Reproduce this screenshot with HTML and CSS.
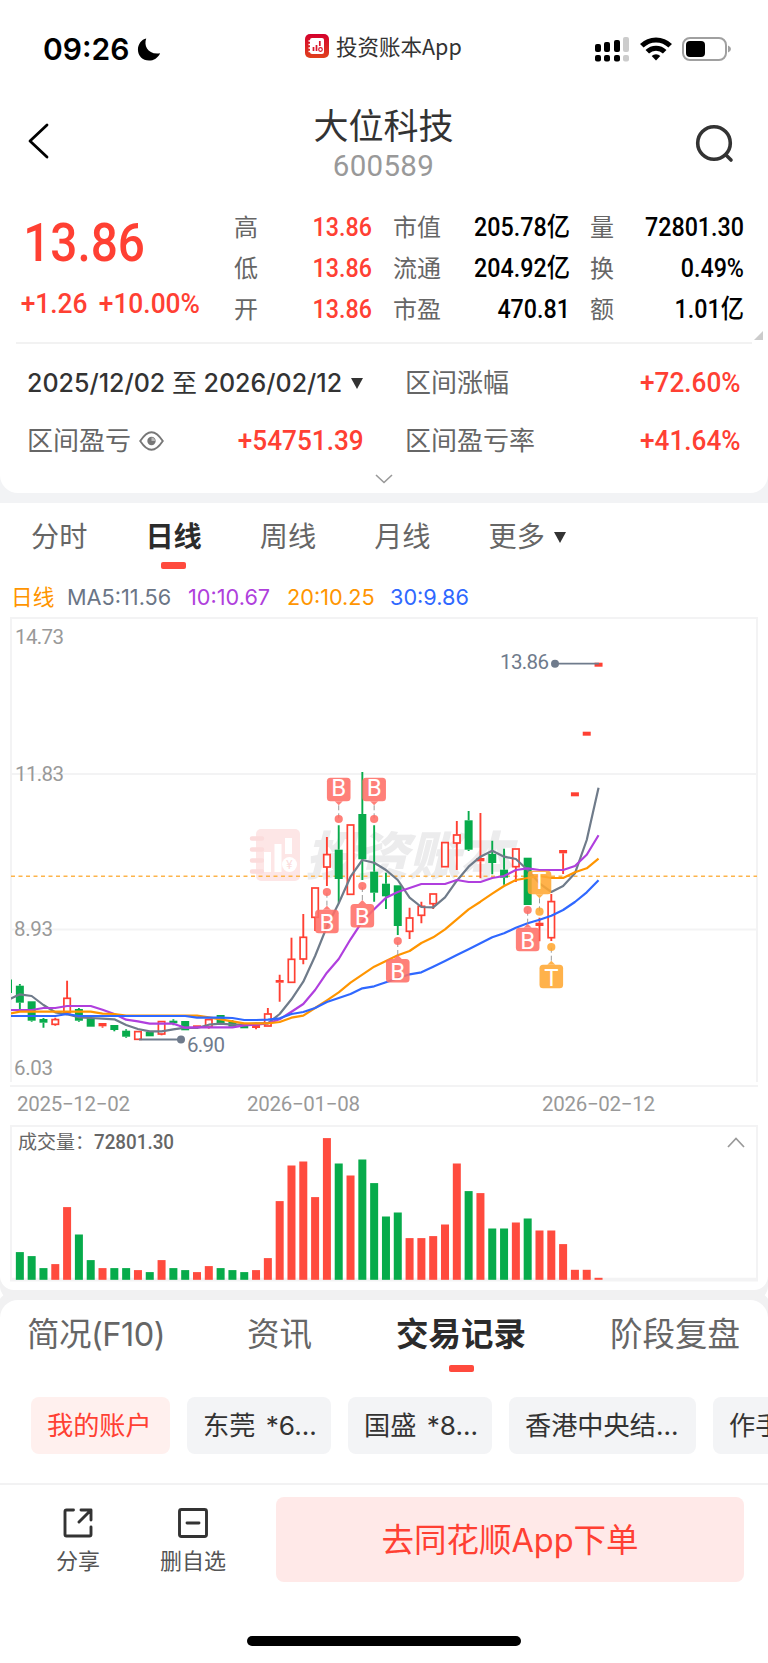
FILE: index.html
```html
<!DOCTYPE html>
<html lang="zh-CN">
<head>
    <meta charset="UTF-8">
    <meta name="viewport" content="width=device-width, initial-scale=1.0">
    <title>大位科技 600589</title>
    <link rel="stylesheet" href="styles.css">
</head>
<body>
    <div class="card top-card">
        <div class="status-bar">
            <div class="status-left">
                <span class="time">09:26</span>
                <svg width="24" height="25" viewBox="0 0 26 26"><path d="M10 1 C7 9 12 19 25 17 C23 22 18 25 13 25 C6 25 1 20 1 13 C1 7 5 2 10 1Z"/></svg>
            </div>
            <div class="status-center">
                <svg width="24" height="24" viewBox="0 0 24 24">
                    <defs><linearGradient id="logo" x1="0" y1="0" x2="0" y2="1"><stop offset="0" stop-color="#d4002c"/><stop offset="1" stop-color="#e0401c"/></linearGradient></defs>
                    <rect width="24" height="24" rx="5" fill="url(#logo)"/>
                    <rect x="5" y="4" width="14" height="16" rx="2" fill="#fff"/>
                    <path d="M3.5 7h3M3.5 10.500h3M3.500 14h3M3.500 17.500h3" stroke="#fff" stroke-width="1.500"/>
                    <path d="M8.500 17v-4M11.500 17v-6M14.800 12V7" stroke="#d9152a" stroke-width="1.700"/>
                    <circle cx="15.500" cy="15.500" r="1.800" fill="none" stroke="#d9152a" stroke-width="1.200"/>
                </svg>
                <span>投资账本App</span>
            </div>
            <div class="status-right">
                <svg width="34" height="25" viewBox="0 0 34 25">
                    <rect x="0" y="7" width="6" height="8" rx="2"/><rect x="9" y="5" width="6" height="10" rx="2"/><rect x="19" y="3" width="6" height="12" rx="2"/><rect x="28" y="0" width="6" height="15" rx="2" fill="#ccc"/>
                    <rect x="0" y="18" width="6" height="6.500" rx="2"/><rect x="9" y="18" width="6" height="6.500" rx="2"/><rect x="19" y="18" width="6" height="6.500" rx="2"/><rect x="28" y="18" width="6" height="6.500" rx="2" fill="#ccc"/>
                </svg>
                <svg class="wifi" width="32" height="24" viewBox="0 0 32 24" fill="none" stroke="#000" stroke-width="5">
                    <path d="M1.800 8.800a20 20 0 0 1 28.400 0"/><path d="M7.300 14.800a12.300 12.300 0 0 1 17.400 0"/><path d="M16 23.500l-4.300-4.500a6 6 0 0 1 8.600 0z" fill="#000" stroke="none"/>
                </svg>
                <svg width="49" height="24" viewBox="0 0 49 24">
                    <rect x="1" y="1" width="43" height="22" rx="7" fill="none" stroke="#a0a0a0" stroke-width="2"/>
                    <rect x="4" y="4" width="19" height="16" rx="4"/><path d="M46 8.500q3 1.200 3 3.500t-3 3.500z" fill="#a0a0a0"/>
                </svg>
            </div>
        </div>

        <header class="title-bar">
            <svg class="back" width="22" height="36" viewBox="0 0 22 36"><path d="M20 2L3 18L20 34" fill="none" stroke="#000" stroke-width="2.800" stroke-linecap="round" stroke-linejoin="round"/></svg>
            <div class="title">
                <h1>大位科技</h1>
                <p>600589</p>
            </div>
            <svg class="search" width="40" height="40" viewBox="0 0 40 40" fill="none" stroke="#333" stroke-width="3.600" stroke-linecap="round"><circle cx="19" cy="19" r="16.300"/><path d="M31 31l5 5"/></svg>
        </header>

        <section class="quote">
            <div class="price">
                <div class="price-now">13.86</div>
                <div class="price-change"><span>+1.26</span><span>+10.00%</span></div>
            </div>
            <dl class="stats">
                <dt>高</dt><dd class="up">13.86</dd><dt>市值</dt><dd>205.78亿</dd><dt>量</dt><dd>72801.30</dd>
                <dt>低</dt><dd class="up">13.86</dd><dt>流通</dt><dd>204.92亿</dd><dt>换</dt><dd>0.49%</dd>
                <dt>开</dt><dd class="up">13.86</dd><dt>市盈</dt><dd>470.81</dd><dt>额</dt><dd>1.01亿</dd>
            </dl>
            <i class="corner"></i>
        </section>

        <section class="range">
            <div class="range-date"><span>2025/12/02 <em>至</em> 2026/02/12</span><i class="arrow"></i></div>
            <div class="range-item"><span>区间涨幅</span><b>+72.60%</b></div>
            <div class="range-item">
                <span>区间盈亏</span>
                <svg width="25" height="20" viewBox="0 0 25 20" fill="none" stroke="#777" stroke-width="1.900"><path d="M1.200 10Q7 1.200 12.500 1.200T23.800 10Q18 18.800 12.500 18.800T1.200 10Z"/><circle cx="12.500" cy="10" r="4.200" fill="#777" stroke="none"/><path d="M12.500 10V6.500A3.500 3.500 0 0 1 16 10Z" fill="#bbb" stroke="none"/></svg>
                <b>+54751.39</b>
            </div>
            <div class="range-item"><span>区间盈亏率</span><b>+41.64%</b></div>
        </section>
        <svg class="expand" width="18" height="10" viewBox="0 0 18 10"><path d="M1 1l8 7.500L17 1" fill="none" stroke="#999" stroke-width="1.600"/></svg>
    </div>

    <div class="card chart-card">
        <nav class="period-tabs">
            <a>分时</a><a class="active">日线</a><a>周线</a><a>月线</a><a>更多<i class="arrow"></i></a>
        </nav>
        <div class="ma-row">
            <span class="ma-name">日线</span><span class="ma5">MA5:11.56</span><span class="ma10">10:10.67</span><span class="ma20">20:10.25</span><span class="ma30">30:9.86</span>
        </div>
        <svg class="chart" width="768" height="678" viewBox="0 612 768 678">
            <defs><clipPath id="plot"><rect x="11" y="618" width="746" height="468"/></clipPath></defs>
            <g class="frame">
                <path d="M11 1082V618H757V1082M11 774H757M11 929.500H757M10 1086H758"/>
                <path d="M11 1126H757V1280.500H11ZM11 1278.800H757"/>
            </g>
            <g class="watermark">
                <rect x="256" y="829" width="44" height="52" rx="5" fill="#fde6e6"/>
                <path d="M252 838.500h10M252 849.500h10M252 860.500h10M252 871.500h10" stroke="#fbdcdc" stroke-width="4.500" stroke-linecap="round"/>
                <path d="M267.500 872v-20M278 872v-28M288.500 854v-16" stroke="#fff" stroke-width="7"/>
                <circle cx="289.500" cy="864.500" r="7.500" fill="#fff"/>
                <text x="286" y="869" font-size="12" fill="#fbdcdc">¥</text>
                <text class="wm-text" x="305" y="875" textLength="207">投资账本</text>
            </g>
            <path d="M11 876.300H757" stroke="#fdb44b" stroke-width="1.400" stroke-dasharray="4 3.500"/>
            <g id="candles" clip-path="url(#plot)"></g>
            <g id="averages" clip-path="url(#plot)"></g>
            <g id="markers"></g>
            <g class="callout">
                <path d="M139 1039.500H181M555 663.700H599"/>
                <circle cx="181" cy="1039.500" r="4"/><circle cx="555" cy="663.700" r="4"/>
                <text x="187" y="1051.500" textLength="38">6.90</text><text x="500" y="668.500" textLength="49">13.86</text>
            </g>
            <g class="axis">
                <text x="15" y="644" textLength="49">14.73</text><text x="15" y="780.500" textLength="49">11.83</text>
                <text x="14" y="936" textLength="39">8.93</text><text x="14" y="1075" textLength="39">6.03</text>
                <text x="17" y="1110.800" textLength="113">2025−12−02</text><text x="247" y="1110.800" textLength="113">2026−01−08</text><text x="542" y="1110.800" textLength="113">2026−02−12</text>
            </g>
            <g id="volume"></g>
            <g class="volume-label"><text x="18" y="1149" font-size="19">成交量：</text><text class="num" x="94" y="1149.200" textLength="80" lengthAdjust="spacingAndGlyphs">72801.30</text></g>
            <path d="M728 1147l8-8.500l8 8.500" fill="none" stroke="#999" stroke-width="1.700"/>
        </svg>
    </div>

    <div class="card record-card">
        <nav class="info-tabs">
            <a class="f10">简况(F10)</a><a>资讯</a><a class="active">交易记录</a><a>阶段复盘</a>
        </nav>
        <div class="accounts">
            <span class="chip selected">我的账户</span><span class="chip w144">东莞 *6...</span><span class="chip w144">国盛 *8...</span><span class="chip w187">香港中央结...</span><span class="chip w144">作手</span>
        </div>
    </div>

    <footer class="bottom-bar">
        <div class="tool share">
            <svg width="30" height="30" viewBox="0 0 30 30" fill="none" stroke="#333" stroke-width="2.900" stroke-linecap="round" stroke-linejoin="round"><path d="M10.500 2H3.500Q2 2 2 3.500V26.500Q2 28 3.500 28H26.500Q28 28 28 26.500V19M18 2H28V12M27.500 2.500L16 14"/></svg>
            <span>分享</span>
        </div>
        <div class="tool remove">
            <svg width="30" height="30" viewBox="0 0 30 30" fill="none" stroke="#333" stroke-width="2.900" stroke-linecap="round"><rect x="1.500" y="1.500" width="27" height="27" rx="2"/><path d="M9 15H21"/></svg>
            <span>删自选</span>
        </div>
        <button class="order">去同花顺App下单</button>
    </footer>
    <div class="home-indicator"></div>

    <script src="chart.js"></script>
</body>
</html>
```
FILE: styles.css
```css
* {
    box-sizing: border-box;
}
body {
    margin: 0;
    width: 768px;
    height: 1663px;
    overflow: hidden;
    background-color: #fff;
    color: #333;
    font-family: Inter, "Noto Sans CJK SC", sans-serif;
}
h1, p, dl, dd {
    margin: 0;
}
.card {
    background-color: #fff;
    overflow: hidden;
    position: relative;
}
.top-card {
    height: 493px;
    border-radius: 0 0 18px 18px;
    box-shadow: 0 20px 0 20px #f2f3f5;
}

/* status bar */
.status-bar {
    height: 94px;
    display: grid;
    grid-template-columns: 263px 158px 1fr;
    padding: 0 37px 0 42px;
    align-items: center;
}
.status-left, .status-center, .status-right {
    display: flex;
    align-items: center;
}
.status-left {
    gap: 8px;
    padding-top: 4px;
}
.time {
    font-size: 30px;
    font-weight: 600;
    color: #000;
    width: 87px;
    padding-left: 1px;
    line-height: 36px;
}
.status-center {
    gap: 7px;
    font-size: 21.500px;
    font-family: "Noto Sans CJK SC", sans-serif;
    white-space: nowrap;
    line-height: 30px;
    padding-bottom: 2px;
}
.status-right {
    justify-content: flex-end;
    padding-top: 4px;
}
.wifi {
    margin: 0 10px 0 11px;
}

/* title */
.title-bar {
    height: 106px;
    display: flex;
    justify-content: space-between;
    padding: 0 33px 0 27px;
}
.back {
    margin-top: 29px;
}
.search {
    margin-top: 30px;
}
.title {
    text-align: center;
    padding-left: 23px;
}
.title h1 {
    font-size: 35px;
    font-weight: 400;
    line-height: 40px;
    margin-top: 12px;
}
.title p {
    font-family: Roboto, sans-serif;
    font-size: 29.500px;
    font-weight: 400;
    color: #999;
    letter-spacing: 0.300px;
    line-height: 34px;
    margin-top: 3px;
}

/* quote */
.quote {
    display: flex;
    height: 144px;
    margin: 0 16px;
    border-bottom: 2px solid #f2f2f2;
    position: relative;
}
.price {
    width: 218px;
    color: #ff4033;
    font-family: Roboto, sans-serif;
    font-weight: 500;
}
.price-now {
    font-size: 53px;
    line-height: 60px;
    padding: 13px 0 0 8px;
    transform: scaleX(0.9);
    transform-origin: left;
}
.price-change {
    display: flex;
    gap: 12px;
    font-size: 28px;
    line-height: 32px;
    padding: 15px 0 0 5px;
    transform: scaleX(0.94);
    transform-origin: left;
}
.stats {
    display: grid;
    grid-template-columns: 38px 100px 63px 135px 41px 133px;
    grid-auto-rows: 41px;
    padding-top: 7px;
    line-height: 41px;
}
.stats dt {
    font-size: 24px;
    color: #666;
}
.stats dt:nth-of-type(3n+2) {
    padding-left: 21px;
    white-space: nowrap;
}
.stats dt:nth-of-type(3n) {
    padding-left: 20px;
}
.stats dd {
    font-family: Roboto, "Noto Sans CJK SC", sans-serif;
    font-size: 26px;
    font-weight: 500;
    text-align: right;
    color: #000;
    transform: scaleX(0.895);
    transform-origin: right;
}
.stats dd.up {
    color: #ff4033;
}
.corner {
    position: absolute;
    right: -11px;
    top: 131px;
    border-left: 9px solid transparent;
    border-bottom: 9px solid #ccc;
}

/* range summary */
.range {
    display: grid;
    grid-template-columns: 337px 1fr;
    grid-auto-rows: 58px;
    column-gap: 41px;
    padding: 10px 27px 0;
    align-items: center;
}
.range-date {
    display: flex;
    align-items: center;
    font-size: 25px;
    font-weight: 500;
    line-height: 36px;
    white-space: nowrap;
}
.range-date em {
    font-style: normal;
    font-weight: 400;
}
.arrow {
    display: inline-block;
    border: 6.500px solid transparent;
    border-top: 11px solid #333;
    border-bottom: 0;
}
.range-date .arrow {
    margin-left: 9px;
}
.range-item {
    display: flex;
    align-items: center;
    font-size: 26px;
    line-height: 36px;
    color: #666;
}
.range-item span {
    padding-bottom: 1px;
}
.range-item svg {
    margin-left: 8px;
}
.range-item b {
    margin-left: auto;
    font-family: Roboto, sans-serif;
    font-size: 28px;
    font-weight: 500;
    color: #ff4033;
    transform: scaleX(0.935);
    transform-origin: right;
}
.expand {
    display: block;
    margin: 4px auto 0;
}

/* chart */
.chart-card {
    height: 787px;
    margin-top: 10px;
    border-radius: 0 0 14px 14px;
    box-shadow: 0 10px 0 #f1f1f2, 0 -10px 0 #f2f3f5;
}
.top-card {
    z-index: 1;
    box-shadow: 0 10px 0 #f2f3f5;
}
.chart-card {
    z-index: 2;
}
.top-card {
    z-index: auto;
    box-shadow: 0 20px 0 20px #f2f3f5;
}
.period-tabs {
    display: flex;
    gap: 58px;
    padding: 14px 31px 0;
    height: 74px;
    font-size: 28.200px;
    line-height: 41px;
    color: #666;
}
.period-tabs .arrow {
    margin: 0 0 4px 9px;
}
.active {
    color: #2b2b2b;
    font-weight: 700;
}
.active::after {
    content: "";
    display: block;
    width: 25px;
    height: 7px;
    margin: 4px auto 0;
    border-radius: 2px;
    background-color: #ff4a3d;
}
.ma-row {
    display: flex;
    height: 35px;
    line-height: 40px;
    padding-left: 11px;
    font-size: 21.700px;
    white-space: nowrap;
}
.ma-name { width: 56px; color: #ff9500; }
.ma5 { width: 121px; color: #6b7586; }
.ma10 { width: 99px; color: #af3fdc; }
.ma20 { width: 103px; color: #ff9500; }
.ma30 { color: #2f68ff; }
.chart {
    display: block;
}
.frame path {
    fill: none;
    stroke: #f3f3f4;
    stroke-width: 2;
}
.wm-text {
    font-family: "Noto Sans CJK SC", sans-serif;
    font-size: 52px;
    font-weight: 900;
    font-style: italic;
    fill: #ececed;
}
.axis text, .callout text, .volume-label .num {
    font-family: Roboto, sans-serif;
    font-size: 20.500px;
    fill: #999;
}
.callout path {
    stroke: #6f7b8c;
    stroke-width: 1.800;
}
.callout circle, .callout text {
    fill: #6f7b8c;
}
.volume-label text {
    fill: #666;
}
.volume-label .num {
    fill: #666;
    font-weight: 500;
}
.avg {
    fill: none;
    stroke-width: 2.200;
    stroke-linejoin: round;
}
.marker text {
    font-family: Roboto, sans-serif;
    font-size: 24px;
    fill: #fff;
    text-anchor: middle;
}

/* records */
.record-card {
    height: 183px;
    margin-top: 10px;
    border-radius: 18px 18px 0 0;
    box-shadow: 0 -5px 0 5px #f1f1f2;
}
.info-tabs {
    display: flex;
    justify-content: space-between;
    padding: 11px 28px 0 27px;
    height: 97px;
    font-size: 32.500px;
    line-height: 48px;
    color: #666;
}
.info-tabs .f10 {
    letter-spacing: -0.500px;
    margin-right: -2px;
}
.info-tabs .active::after {
    margin-top: 6px;
}
.accounts {
    display: flex;
    gap: 17px;
    padding-left: 31px;
}
.chip {
    flex: none;
    width: 139px;
    height: 57px;
    padding-left: 16px;
    border-radius: 8px;
    background-color: #f3f4f6;
    font-size: 26.200px;
    line-height: 58px;
    white-space: nowrap;
}
.chip.selected {
    background-color: #fff0ee;
    color: #ff4033;
}
.w144 { width: 144px; word-spacing: 3px; }
.w187 { width: 187px; }

/* bottom bar */
.bottom-bar {
    height: 153px;
    border-top: 2px solid #f2f2f3;
    display: flex;
    padding-left: 23px;
}
.tool {
    width: 110px;
    padding-top: 23px;
    display: flex;
    flex-direction: column;
    align-items: center;
    font-size: 22px;
    line-height: 32px;
    color: #555;
}
.tool span {
    margin-top: 7px;
}
.remove {
    width: 120px;
}
.order {
    width: 468px;
    height: 85px;
    margin: 12px 0 0 23px;
    padding: 0 0 4px;
    border: 0;
    border-radius: 8px;
    background-color: #ffe9e8;
    color: #ff4033;
    font-family: inherit;
    font-size: 32.500px;
}
.home-indicator {
    width: 274px;
    height: 10px;
    margin: 0 auto;
    border-radius: 5px;
    background-color: #000;
}
```
FILE: chart.js
```js
const STEP = 11.81;
const X0 = 19.85;
const RED = '#ff4033';
const GREEN = '#07ab4b';

const x = i => +(X0 + i * STEP).toFixed(2);

// [high, body top, body bottom, low, kind]  g: down, r: up (hollow), f: up with no visible body
const candles = [
    [984, 985.7, 1002.7, 1010, 'g'], [1001.3, 1001.3, 1020.7, 1021.7, 'g'], [1018, 1019, 1022.7, 1027.7, 'g'],
    [1017.7, 1019.3, 1024.3, 1025.7, 'r'], [980.7, 998, 1012.7, 1012.7, 'r'], [1008, 1009, 1020.7, 1021.7, 'g'],
    [1018, 1018, 1026.7, 1026.7, 'g'], [1023, 1023, 1026.3, 1027.7, 'f'], [1025, 1025, 1030, 1031.3, 'g'],
    [1029.3, 1030.7, 1036.7, 1037.7, 'g'], [1031.3, 1031.3, 1039.3, 1039.3, 'r'], [1032, 1032, 1036.3, 1036.3, 'g'],
    [1021.3, 1021.3, 1034, 1035.3, 'r'], [1019.3, 1020.7, 1023.3, 1025.3, 'g'], [1021, 1021, 1030.3, 1030.3, 'g'],
    [1025.3, 1025.3, 1028, 1029, 'f'], [1019.3, 1019.3, 1027, 1028.7, 'r'], [1015, 1015, 1023.3, 1023.3, 'g'],
    [1020, 1021, 1026.7, 1026.7, 'g'], [1025, 1025, 1028.3, 1028.3, 'g'], [1022.7, 1024.7, 1028, 1029.3, 'f'],
    [1008, 1013.7, 1026, 1026, 'r'], [974.7, 980, 982.7, 1001.7, 'f'], [937.7, 959, 982.3, 982.3, 'r'],
    [914, 937, 959, 964.3, 'r'], [887.7, 887.7, 917.3, 931, 'r'], [837, 854.3, 867, 886, 'r'],
    [825.3, 849.7, 879, 903.3, 'g'], [824.7, 824.7, 894.3, 894.3, 'r'], [772, 814, 859.3, 880, 'g'],
    [825.3, 871.7, 892.7, 901.7, 'g'], [872.7, 883.7, 896.3, 909, 'g'], [885.3, 885.3, 926, 935, 'g'],
    [907.7, 917.7, 931.3, 939, 'r'], [901.7, 906, 915.3, 923.3, 'r'], [893.7, 893.7, 903.7, 909, 'r'],
    [842.3, 842.3, 866.7, 866.7, 'r'], [821, 834.7, 843, 870, 'r'], [811, 820.3, 849.7, 851, 'g'],
    [813, 858, 861.3, 878.3, 'f'], [840.7, 854, 863, 874.3, 'g'], [848.7, 869.7, 877.7, 884.7, 'g'],
    [848.7, 848.7, 866.7, 882, 'r'], [857.7, 857.7, 905, 905, 'g'], [917.7, 922.7, 926, 941.3, 'f'],
    [894, 901.3, 937.7, 941, 'r'], [850, 850, 853.3, 874, 'f'], [792.3, 792.3, 796.3, 796.3, 'f'],
    [731.7, 731.7, 735.7, 735.7, 'f'], [662.7, 662.7, 666.7, 666.7, 'f']
];

// first point sits one step left of the first full candle
const averages = {
    '#6f7b8a': [1000, 994.3, 996, 1005, 1012.3, 1014.3, 1017.3, 1018, 1018.7, 1019.3, 1025, 1029, 1031.3, 1031.3, 1029.3, 1027.7, 1028, 1024.7, 1023.7, 1024.7, 1024.7, 1023.3, 1023.3, 1014, 999.3, 981.7, 956, 926.7, 903.3, 876.7, 860, 862.7, 870, 880, 897.7, 907, 907.3, 897.3, 880.7, 866.7, 856.7, 850.7, 856.7, 859, 870, 883.3, 892, 886, 873.3, 840, 787.7],
    '#b03fde': [1010, 1010, 1010, 1008, 1008, 1006, 1006, 1006, 1009.7, 1014, 1019.7, 1021.3, 1023.7, 1023.7, 1023.7, 1027.7, 1027.3, 1027.3, 1027.3, 1027.3, 1025.3, 1024.7, 1023.3, 1019.3, 1011.7, 1004, 990, 972.7, 959, 939.3, 921.3, 909.3, 897.7, 892, 888, 884, 884, 884, 880, 882, 882, 878, 876, 870, 868.3, 870, 870, 870, 866, 854.7, 835.3],
    '#ff9500': [1014, 1011.7, 1011.7, 1011.7, 1011.7, 1011.7, 1011.7, 1011.7, 1013.7, 1014, 1015.7, 1015.7, 1015.7, 1015.7, 1015.7, 1015.7, 1015.7, 1017.3, 1019.3, 1021.3, 1023.3, 1023.3, 1023.3, 1022, 1017.7, 1015.7, 1008, 1000.3, 992.3, 982.7, 974.7, 966.7, 961, 955.3, 951, 943, 937.3, 929.3, 919.3, 909.3, 901.7, 893.7, 886, 880, 878, 876, 878, 878, 872.3, 868.3, 858.7],
    '#2f68ff': [1016, 1016, 1016, 1016, 1016, 1014, 1016, 1016, 1016, 1016, 1016, 1016, 1016, 1016, 1016, 1016, 1017.7, 1017.7, 1017.7, 1018, 1020, 1020, 1019.7, 1018.3, 1014, 1012, 1008, 1002, 998, 994, 988.3, 986.3, 982.3, 978.3, 974.3, 972.3, 966.7, 961, 955, 949.3, 943.3, 937.3, 933.3, 927.7, 923.3, 919.7, 915.7, 910, 902, 892.3, 880.3]
};

// [candle index, box top, dot y, letter]
const markers = [
    [27, 777.7, 819, 'B'], [30, 777.7, 819, 'B'], [26, 909.7, 892, 'B'], [29, 904, 886, 'B'],
    [32, 959, 941, 'B'], [43, 927.7, 910, 'B'], [44, 870.7, 911.7, 'T'], [45, 964.7, 947, 'T']
];

const volumes = [
    [27.7, 'g'], [23.7, 'g'], [11.7, 'g'], [15.7, 'r'], [72.7, 'r'], [45.3, 'g'], [19.7, 'g'], [11.7, 'r'], [11.7, 'g'], [11.7, 'g'],
    [9.7, 'r'], [7.7, 'g'], [19.7, 'r'], [11.7, 'g'], [9.7, 'g'], [7.7, 'r'], [13.7, 'r'], [11.7, 'g'], [9.7, 'g'], [7.7, 'g'],
    [9.7, 'r'], [21.7, 'r'], [78.7, 'r'], [114.3, 'r'], [118.3, 'r'], [82.7, 'r'], [141.7, 'r'], [116.3, 'g'], [104.3, 'r'], [120.3, 'g'],
    [96.7, 'g'], [63.3, 'g'], [67.3, 'g'], [41.7, 'r'], [41.7, 'r'], [43.7, 'r'], [55.3, 'r'], [116.3, 'r'], [88.7, 'g'], [86.7, 'r'],
    [51.3, 'g'], [51.3, 'g'], [57.3, 'r'], [61.3, 'g'], [49.3, 'r'], [49.3, 'r'], [35.7, 'r'], [10, 'r'], [10, 'r'], [2, 'r']
];

let out = `<rect x="4" y="979.5" width="8" height="13.5" fill="${GREEN}"/>`;
candles.forEach(([high, top, bottom, low, kind], i) => {
    const c = x(i);
    const color = kind === 'g' ? GREEN : RED;
    out += `<path d="M${c} ${high}V${top}M${c} ${bottom}V${low}" stroke="${color}" stroke-width="1.9"/>`;
    if (kind === 'r') {
        out += `<rect x="${c - 3.2}" y="${top + 0.3}" width="6.4" height="${bottom - top - 0.3}" fill="#fff" stroke="${RED}" stroke-width="1.7"/>`;
    } else {
        out += `<rect x="${c - 4}" y="${top}" width="8" height="${bottom - top}" fill="${color}"/>`;
    }
});
document.getElementById('candles').innerHTML = out;

out = '';
for (const color in averages) {
    const points = averages[color].map((y, i) => `${x(i - 1)},${y}`).join(' ');
    out += `<polyline class="avg" points="${points}" stroke="${color}"/>`;
}
document.getElementById('averages').innerHTML = out;

out = '';
markers.forEach(([i, top, dot, letter]) => {
    const c = x(i);
    const color = letter === 'B' ? '#ff6f67' : '#ffa833';
    const above = dot > top;
    const edge = above ? top + 23.6 : top;
    const tip = above ? edge + 4 : edge - 4;
    out += `<g class="marker"><path d="M${c} ${tip}V${dot}" stroke="#999" stroke-width="1" stroke-dasharray="5 3"/>
        <g fill="${color}" opacity="0.88"><rect x="${c - 11.8}" y="${top}" width="23.6" height="23.6" rx="3.5"/>
        <path d="M${c - 4} ${edge}L${c} ${tip}L${c + 4} ${edge}Z"/><circle cx="${c}" cy="${dot}" r="4.1"/></g>
        <text x="${c}" y="${top + (above ? 18 : 21)}">${letter}</text></g>`;
});
document.getElementById('markers').innerHTML = out;

out = '';
volumes.forEach(([h, kind], i) => {
    out += `<rect x="${x(i) - 4}" y="${1279.8 - h}" width="8" height="${h}" fill="${kind === 'g' ? GREEN : '#ff4b3e'}"/>`;
});
document.getElementById('volume').innerHTML = out;
```
